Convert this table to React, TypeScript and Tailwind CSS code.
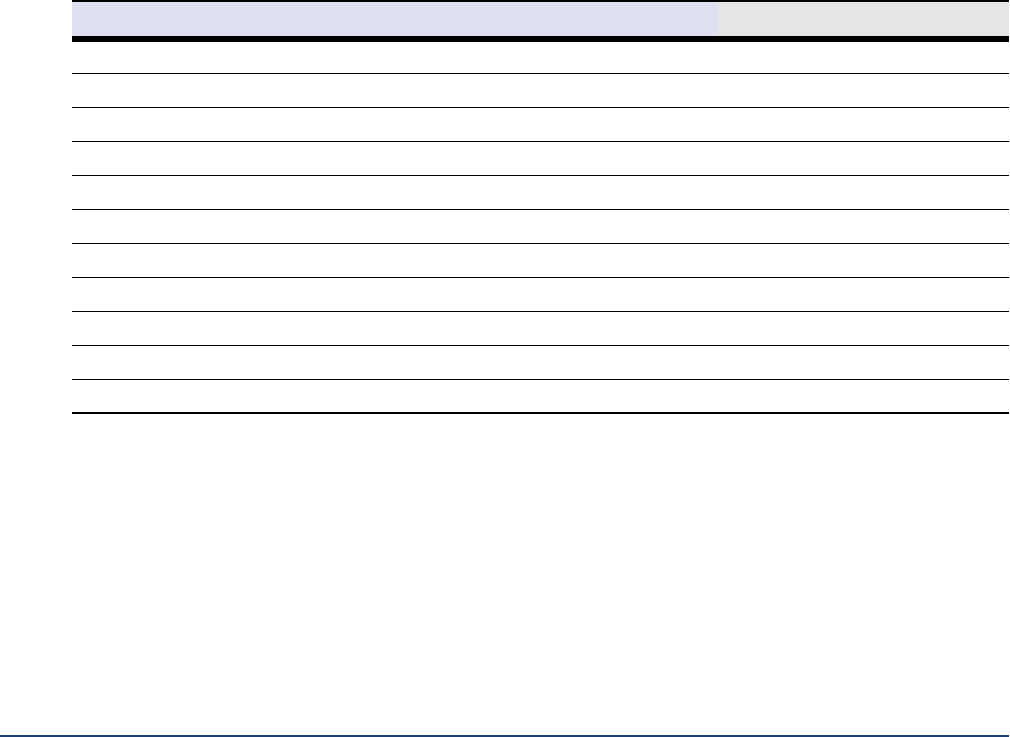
export default function App() {
  const rows = Array.from({ length: 9 });

  return (
    <div className="flex h-[737px] w-[1010px] flex-col bg-white">
      {/* Table */}
      <div className="ml-[72px] w-[937px] border-t-2 border-black">
        <div className="flex h-[40px] border-b-[6px] border-black">
          <div className="w-[646px] bg-[#dfe1f0]" />
          <div className="flex-1 bg-[#e5e5e5]" />
        </div>
        <div className="h-[32px] border-b border-black" />
        {rows.map((_, i) => (
          <div key={i} className="h-[34px] border-b border-black" />
        ))}
        <div className="h-[34px] border-b-2 border-black" />
      </div>

      {/* Footer rule */}
      <div className="mt-auto h-[2px] w-[1009px] bg-[#1c3f74]" />
    </div>
  );
}
